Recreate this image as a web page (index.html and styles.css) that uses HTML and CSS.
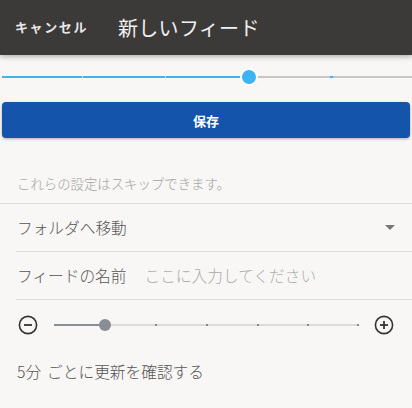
FILE: index.html
```html
<!DOCTYPE html>
<html lang="ja">
<head>
<meta charset="utf-8">
<link rel="stylesheet" href="styles.css">
</head>
<body>
<header class="bar">
  <span class="cancel">キャンセル</span>
  <span class="title">新しいフィード</span>
</header>
<div class="steps">
  <div class="steps-track">
    <div class="steps-fill"></div>
    <span class="tick t1"></span>
    <span class="tick t2"></span>
    <span class="tick t4"></span>
    <span class="steps-thumb"></span>
  </div>
</div>
<div class="btn-wrap"><button class="save">保存</button></div>
<p class="hint">これらの設定はスキップできます。</p>
<div class="sep full"></div>
<div class="row">
  <span class="label">フォルダへ移動</span>
  <span class="caret"></span>
</div>
<div class="sep"></div>
<div class="row">
  <span class="label">フィードの名前</span>
  <span class="placeholder">ここに入力してください</span>
</div>
<div class="sep"></div>
<div class="slider-row">
  <svg class="icon" width="20" height="20" viewBox="0 0 20 20"><circle cx="10" cy="10" r="8.6" fill="none" stroke="#333" stroke-width="1.6"/><line x1="6" y1="10" x2="14" y2="10" stroke="#333" stroke-width="1.8"/></svg>
  <div class="slider">
    <div class="slider-fill"></div>
    <span class="dot d2"></span><span class="dot d3"></span><span class="dot d4"></span><span class="dot d5"></span><span class="dot d6"></span>
    <span class="slider-thumb"></span>
  </div>
  <svg class="icon" width="20" height="20" viewBox="0 0 20 20"><circle cx="10" cy="10" r="8.6" fill="none" stroke="#333" stroke-width="1.6"/><line x1="6" y1="10" x2="14" y2="10" stroke="#333" stroke-width="1.8"/><line x1="10" y1="6" x2="10" y2="14" stroke="#333" stroke-width="1.8"/></svg>
</div>
<p class="interval"><span class="num">5分</span>ごとに更新を確認する</p>
</body>
</html>
```
FILE: styles.css
```css
html, body {
  margin: 0;
  padding: 0;
  background: #f8f7f5;
  font-family: "Noto Sans CJK JP", "Noto Sans", sans-serif;
}
.bar {
  height: 55px;
  background: #3c3a38;
  display: flex;
  align-items: center;
  box-shadow: 0 2px 5px rgba(0,0,0,0.28);
  position: relative;
  z-index: 1;
}
.cancel {
  color: #e8e8e8;
  font-size: 13px;
  font-weight: bold;
  letter-spacing: 1.6px;
  margin-left: 15px;
  margin-top: -2px;
}
.title {
  color: #f0f0f0;
  font-size: 20px;
  font-weight: 400;
  margin-left: 30px;
  letter-spacing: 0.3px;
}
.steps {
  padding: 21px 0 0 2px;
  height: 47px;
  box-sizing: border-box;
}
.steps-track {
  position: relative;
  height: 2px;
  background: #c6c6c6;
}
.steps-fill {
  width: 245px;
  height: 2px;
  background: #3db4f2;
}
.tick {
  position: absolute;
  top: 0;
  width: 1px;
  height: 2px;
  background: #cfcfcf;
}
.t1 { left: 80px; }
.t2 { left: 163px; }
.t4 { left: 328px; width: 3px; background: #3db4f2; }
.steps-thumb {
  position: absolute;
  left: 238px;
  top: -8px;
  width: 14px;
  height: 14px;
  border-radius: 50%;
  background: #3db4f2;
  border: 2px solid #fff;
}
.btn-wrap {
  padding: 0 2px;
}
.save {
  display: block;
  width: 100%;
  height: 36px;
  border: none;
  border-radius: 4px;
  background: #1455ab;
  color: #fff;
  font-family: inherit;
  font-size: 13px;
  font-weight: bold;
  box-shadow: 0 1px 3px rgba(0,0,0,0.3);
}
.hint {
  margin: 0;
  padding: 35px 0 0 17px;
  height: 65px;
  box-sizing: border-box;
  font-size: 13.4px;
  font-weight: 300;
  color: #a3a3a3;
  line-height: 20px;
}
.sep {
  height: 1px;
  background: #dddcda;
  margin-left: 16px;
}
.sep.full { margin-left: 0; }
.row {
  height: 47px;
  display: flex;
  align-items: center;
  padding-left: 17px;
  padding-right: 16px;
  box-sizing: border-box;
}
.label {
  font-size: 15.7px;
  font-weight: 300;
  color: #555;
}
.placeholder {
  font-size: 15.7px;
  font-weight: 300;
  color: #aaa;
  margin-left: 18px;
}
.caret {
  margin-left: auto;
  margin-right: 1px;
  width: 0;
  height: 0;
  border-left: 5px solid transparent;
  border-right: 5px solid transparent;
  border-top: 5px solid #777;
}
.slider-row {
  height: 49px;
  display: flex;
  align-items: center;
  padding: 0 18px 0 18px;
}
.slider {
  position: relative;
  flex: 1;
  height: 2px;
  background: #dcdcdc;
  margin: 0 15px 0 16px;
}
.slider-fill {
  width: 51px;
  height: 2px;
  background: #8a8d94;
}
.dot {
  position: absolute;
  top: 0;
  width: 2px;
  height: 2px;
  background: #888;
}
.d2 { left: 101px; }
.d3 { left: 152px; }
.d4 { left: 203px; }
.d5 { left: 253px; }
.d6 { left: 303px; }
.slider-thumb {
  position: absolute;
  left: 45px;
  top: -5px;
  width: 12px;
  height: 12px;
  border-radius: 50%;
  background: #8a8d94;
}
.interval {
  margin: 0;
  padding: 13px 0 0 17px;
  font-size: 15.7px;
  font-weight: 300;
  color: #555;
  line-height: 20px;
}
.num {
  margin-right: 6px;
}
```
